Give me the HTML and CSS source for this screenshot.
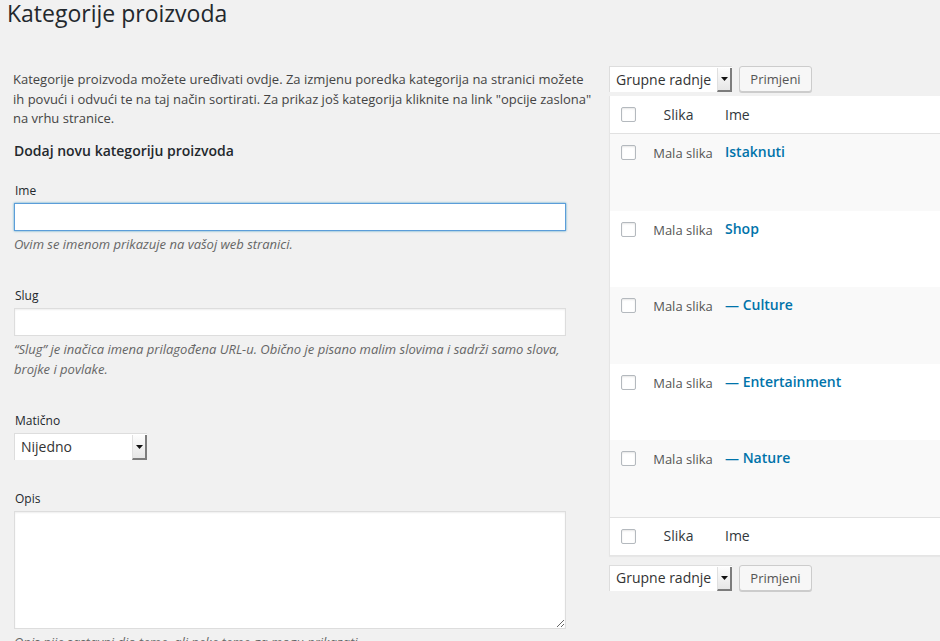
FILE: index.html
```html
<!DOCTYPE html>
<html lang="hr">
<head>
<meta charset="utf-8">
<title>Kategorije proizvoda</title>
<link rel="stylesheet" href="styles.css">
</head>
<body>
<div class="wrap">
  <h1 class="title">Kategorije proizvoda</h1>
  <div class="cols">
    <div class="col-left">
      <p class="intro">Kategorije proizvoda možete uređivati ovdje. Za izmjenu poredka kategorija na stranici možete ih povući i odvući te na taj način sortirati. Za prikaz još kategorija kliknite na link "opcije zaslona" na vrhu stranice.</p>
      <h2 class="form-title">Dodaj novu kategoriju proizvoda</h2>
      <div class="field">
        <label class="lbl">Ime</label>
        <input class="text focus" type="text">
        <p class="desc">Ovim se imenom prikazuje na vašoj web stranici.</p>
      </div>
      <div class="field">
        <label class="lbl">Slug</label>
        <input class="text" type="text">
        <p class="desc">“Slug” je inačica imena prilagođena URL-u. Obično je pisano malim slovima i sadrži samo slova, brojke i povlake.</p>
      </div>
      <div class="field field-nodesc">
        <label class="lbl">Matično</label>
        <div class="select sel-parent"><span class="sel-text">Nijedno</span><span class="sel-arrow"><svg width="7" height="4" viewBox="0 0 7 4"><path d="M0 0H7L3.5 4Z" fill="#111"/></svg></span></div>
      </div>
      <div class="field">
        <label class="lbl">Opis</label>
        <textarea class="area"></textarea>
        <p class="desc">Opis nije sastavni dio teme, ali neke teme ga mogu prikazati.</p>
      </div>
    </div>
    <div class="col-right">
      <div class="actions">
        <div class="select sel-bulk"><span class="sel-text">Grupne radnje</span><span class="sel-arrow"><svg width="7" height="4" viewBox="0 0 7 4"><path d="M0 0H7L3.5 4Z" fill="#111"/></svg></span></div>
        <span class="btn">Primjeni</span>
      </div>
      <div class="table">
        <div class="row head">
          <div class="c-cb"><span class="cb"></span></div>
          <div class="c-img">Slika</div>
          <div class="c-name">Ime</div>
        </div>
        <div class="row item alt">
          <div class="c-cb"><span class="cb"></span></div>
          <div class="c-img small">Mala slika</div>
          <div class="c-name"><a class="link">Istaknuti</a></div>
        </div>
        <div class="row item">
          <div class="c-cb"><span class="cb"></span></div>
          <div class="c-img small">Mala slika</div>
          <div class="c-name"><a class="link">Shop</a></div>
        </div>
        <div class="row item alt">
          <div class="c-cb"><span class="cb"></span></div>
          <div class="c-img small">Mala slika</div>
          <div class="c-name"><a class="link">— Culture</a></div>
        </div>
        <div class="row item">
          <div class="c-cb"><span class="cb"></span></div>
          <div class="c-img small">Mala slika</div>
          <div class="c-name"><a class="link">— Entertainment</a></div>
        </div>
        <div class="row item alt">
          <div class="c-cb"><span class="cb"></span></div>
          <div class="c-img small">Mala slika</div>
          <div class="c-name"><a class="link">— Nature</a></div>
        </div>
        <div class="row head foot">
          <div class="c-cb"><span class="cb"></span></div>
          <div class="c-img">Slika</div>
          <div class="c-name">Ime</div>
        </div>
      </div>
      <div class="actions bottom">
        <div class="select sel-bulk"><span class="sel-text">Grupne radnje</span><span class="sel-arrow"><svg width="7" height="4" viewBox="0 0 7 4"><path d="M0 0H7L3.5 4Z" fill="#111"/></svg></span></div>
        <span class="btn">Primjeni</span>
      </div>
    </div>
  </div>
</div>
</body>
</html>
```

FILE: styles.css
```css
html, body {
  margin: 0;
  padding: 0;
  background: #f1f1f1;
  overflow: hidden;
}
body {
  width: 940px;
  height: 641px;
  font-family: "Open Sans", "Liberation Sans", sans-serif;
  font-size: 13px;
  color: #444;
}
.wrap {
  padding: 0 0 0 7px;
}
.title {
  margin: 0;
  font-size: 23px;
  font-weight: 400;
  line-height: 27px;
  color: #23282d;
}
.cols {
  display: flex;
  margin-top: 39px;
  margin-left: 7px;
  gap: 14px;
}
.col-left {
  width: 581px;
  flex: none;
}
.col-right {
  width: 340px;
  flex: none;
}
.intro {
  margin: 4px 0 0 -1px;
  line-height: 19.5px;
  color: #444;
}
.form-title {
  margin: 12px 0 21px;
  font-size: 14px;
  font-weight: 600;
  line-height: 20px;
  color: #23282d;
}
.field {
  margin-bottom: 33px;
}
.field-nodesc {
  margin-bottom: 30px;
}
.lbl {
  display: block;
  font-size: 12px;
  line-height: 18px;
  color: #23282d;
  margin-bottom: 3px;
  margin-left: 1px;
}
.text {
  display: block;
  box-sizing: border-box;
  width: 552px;
  height: 28px;
  margin: 0;
  border: 1px solid #ddd;
  background: #fff;
  box-shadow: inset 0 1px 2px rgba(0,0,0,.07);
  outline: none;
}
.text.focus {
  border-color: #5b9dd9;
  box-shadow: 0 0 2px rgba(30,140,190,.8);
}
.desc {
  margin: 4px 0 0;
  font-style: italic;
  font-size: 13px;
  line-height: 19.5px;
  color: #666;
  width: 570px;
}
.area {
  display: block;
  box-sizing: border-box;
  width: 552px;
  height: 118px;
  margin: 0;
  border: 1px solid #ddd;
  background: #fff;
  box-shadow: inset 0 1px 2px rgba(0,0,0,.07);
  resize: both;
  outline: none;
}
.select {
  position: relative;
  display: flex;
  align-items: center;
  box-sizing: border-box;
  height: 27px;
  background: #fff;
  border: 1px solid #ddd;
  border-right: 0;
  border-bottom: 0;
  font-size: 14px;
  color: #333;
}
.sel-parent {
  width: 133px;
}
.sel-bulk {
  width: 123px;
  height: 26px;
}
.sel-text {
  flex: 1;
  padding-left: 6px;
  line-height: 20px;
}
.sel-arrow {
  align-self: stretch;
  width: 12px;
  display: flex;
  align-items: center;
  justify-content: center;
  background: linear-gradient(#fdfdfd, #e6e6e6);
  border-left: 1px solid #e0e0e0;
  border-right: 2px solid #7c7c7c;
  border-bottom: 2px solid #7c7c7c;
  margin-top: 1px;
}
.actions {
  display: flex;
  gap: 7px;
  align-items: center;
  margin-bottom: 4px;
}
.actions.bottom {
  margin-top: 9px;
}
.btn {
  box-sizing: border-box;
  display: inline-flex;
  align-items: center;
  justify-content: center;
  width: 73px;
  height: 26px;
  background: #f7f7f7;
  border: 1px solid #ccc;
  border-radius: 3px;
  box-shadow: 0 1px 0 #ccc;
  font-size: 13px;
  color: #555;
}
.table {
  background: #fff;
  border: 1px solid #e5e5e5;
  border-top: 0;
  box-shadow: 0 1px 1px rgba(0,0,0,.04);
}
.row {
  display: flex;
  box-sizing: border-box;
}
.row.head {
  height: 38px;
  border-bottom: 1px solid #e1e1e1;
  align-items: center;
  font-size: 14px;
  color: #32373c;
}
.row.foot {
  border-bottom: 0;
  border-top: 1px solid #e1e1e1;
  height: 38px;
}
.row.item {
  height: 76.5px;
  align-items: flex-start;
  padding-top: 8px;
}
.row.alt {
  background: #f9f9f9;
}
.c-cb {
  width: 35px;
  flex: none;
  display: flex;
  justify-content: center;
  padding-left: 1px;
}
.row.item .c-cb {
  padding-top: 3px;
}
.cb {
  box-sizing: border-box;
  display: block;
  width: 15px;
  height: 15px;
  border: 1px solid #b4b9be;
  border-radius: 2px;
  background: #fff;
  box-shadow: inset 0 1px 2px rgba(0,0,0,.1);
}
.c-img {
  width: 74px;
  flex: none;
  text-align: center;
  line-height: 20px;
}
.row.head .c-img {
  padding-right: 9px;
  box-sizing: border-box;
}
.c-img.small {
  font-size: 13px;
  color: #555;
  padding-top: 1px;
}
.c-name {
  padding-left: 5px;
  line-height: 20px;
}
.link {
  font-size: 14px;
  font-weight: 600;
  color: #0073aa;
  text-decoration: none;
}
```
